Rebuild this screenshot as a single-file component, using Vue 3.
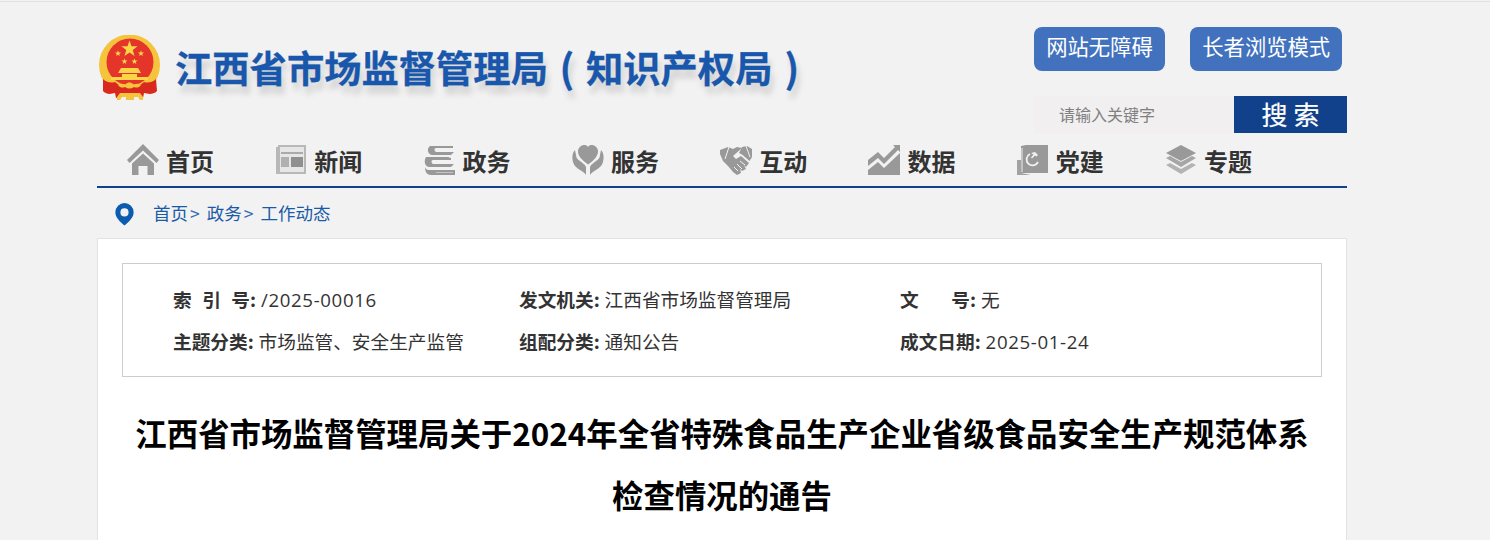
<script setup>
const navItems = [
  { name: '首页', icon: 'home' },
  { name: '新闻', icon: 'news' },
  { name: '政务', icon: 'books' },
  { name: '服务', icon: 'care' },
  { name: '互动', icon: 'shake' },
  { name: '数据', icon: 'chart' },
  { name: '党建', icon: 'party' },
  { name: '专题', icon: 'layers' }
]

const metaRows = [
  [
    { label: '索&ensp;&#8202;引&ensp;&#8202;号:', value: '/2025-00016', num: true },
    { label: '发文机关:', value: '江西省市场监督管理局' },
    { label: '文&emsp;&ensp;&#8197;号:', value: '无' }
  ],
  [
    { label: '主题分类:', value: '市场监管、安全生产监管' },
    { label: '组配分类:', value: '通知公告' },
    { label: '成文日期:', value: '2025-01-24', num: true }
  ]
]
</script>

<template>
  <div class="wrap">
    <div class="top-line"></div>
    <div class="page">
      <header class="header">
        <div class="brand">
          <svg class="emblem" viewBox="0 0 62 66" width="62" height="66">
            <defs>
              <path id="star" d="M0-1l.235.676.716.015-.571.432.207.686L0 .4l-.587.409.207-.686-.571-.432.716-.015z" fill="#f9d648" />
            </defs>
            <circle cx="30.500" cy="30" r="30.500" fill="#f5c33c" />
            <circle cx="31" cy="27" r="23.500" fill="#e5352b" />
            <use href="#star" transform="translate(30.500 14) scale(8.500)" />
            <use href="#star" transform="translate(19 18.500) scale(3.200)" />
            <use href="#star" transform="translate(42 18.500) scale(3.200)" />
            <use href="#star" transform="translate(25.500 26.500) scale(3.200)" />
            <use href="#star" transform="translate(35.500 26.500) scale(3.200)" />
            <path d="M22 33h17l3 5H19zM23 39h15v3H23zM12 42h37v3H12z" fill="#f9d648" />
            <path d="M4 44c4 4 9 4 12 3 3 3 7 5 14.500 5S42 50 45 47c3 1 8 1 12-3l1 12c-4 4-9 3-13 2l-1 5-7-3H24l-7 3-1-5c-4 1-8 2-12-2z" fill="#d9281e" />
            <path d="M19 50c3-3 6 0 8-1 2-2 5-2 7 0 2 1 5-2 8 1-2 3-5 3-7 2-3 2-6 2-9 0-2 1-5 1-7-2z" fill="#f5c33c" />
            <path d="M18 65v-3l3-4h20l3 4v3h-3l-2-3H23l-2 3zM27 60h8v5h-8z" fill="#f5c33c" />
          </svg>
          <h1 class="site-title">江西省市场监督管理局<span class="paren open">(</span>知识产权局<span class="paren">)</span></h1>
        </div>
        <div class="tools">
          <div class="tool-buttons">
            <a class="tool-btn">网站无障碍</a>
            <a class="tool-btn">长者浏览模式</a>
          </div>
          <div class="search">
            <span class="search-input">请输入关键字</span>
            <span class="search-btn">搜 索</span>
          </div>
        </div>
      </header>

      <nav class="nav">
        <a v-for="item in navItems" :key="item.name" class="nav-item">
          <svg class="nav-icon" viewBox="0 0 32 32" width="32" height="32" fill="#999">
            <template v-if="item.icon === 'home'">
              <path d="M16 0 L32 16 L29.500 19 L16 6.500 L2.500 19 L0 16Z" />
              <path d="M5 19.500 L16 9.500 L27 19.500 V31 H20.500 V22 H11.500 V31 H5Z" />
            </template>
            <template v-else-if="item.icon === 'news'">
              <path d="M3 1h28v29H1V3h2z" fill="#b8b8b8" />
              <path d="M5 3h24v25H5z" fill="#e6e6e6" />
              <path d="M6 8h22v2H6z" fill="#aaa" />
              <path d="M6 13h8v10H6z" fill="#b0b0b0" />
              <path d="M16 13h12v10H16z" fill="#8f8f8f" />
            </template>
            <template v-else-if="item.icon === 'books'">
              <path d="M6 2h23v2H12c-2 0-2 3 0 4h18l-3 3H8C3 10 3 4 6 2z" />
              <path d="M2 13h22l3 1v2H9c-2 0-2 3 0 4h21l-3 3H5C0 22 0 16 2 13z" />
              <path d="M1 23c1 3 3 3 5 3h25v5H7c-4 0-6-3-6-8z" />
              <path d="M12 28h17v1H12z" fill="#c4c4c4" />
            </template>
            <template v-else-if="item.icon === 'care'">
              <path d="M16 20.500C10 16 6 12 6 7.500 6 3 10 .5 13 1c1.500.2 2.500 1 3 2 .5-1 1.500-1.800 3-2 3-.5 7 2 7 6.500 0 4.500-4 9-10 13z" />
              <path d="M3 6C0 9 0 14 1 18c1 4 4 6 7 8 2 1 5 3 6 5v-8c-1-3-4-4-6-6-2-1-4-3-4-6z" />
              <path d="M29 6c3 3 3 8 2 12-1 4-4 6-7 8-2 1-5 3-6 5v-8c1-3 4-4 6-6 2-1 4-3 4-6z" />
            </template>
            <template v-else-if="item.icon === 'shake'">
              <path d="M0 6 L8 3 L13 5 L17 3 L22 4 L13 12 L16 15 L21 12 L29 19 L26 23 L24 21 L26 25 L22 27 L20 25 L21 29 L17 31 L13 28 L8 22 L3 17 L0 10 Z" />
              <path d="M22 3 L27 2 L32 5 V13 L29.500 17 L22 10.500 L19 9 Z" />
              <path d="M9 3L5 15M26 2l4 11M14 23l4 4M17 20l5 5M20 17l5 4" fill="none" stroke="#f2f2f2" stroke-width="1" />
            </template>
            <template v-else-if="item.icon === 'chart'">
              <path d="M0 16l10-8 6 6L27 3l-2-2h7v7l-2-2-14 14-6-6-10 8z" />
              <path d="M0 26l10-8 6 6L32 9v22H0z" />
            </template>
            <template v-else-if="item.icon === 'party'">
              <path d="M4 2l5-1h22v28H4z" />
              <path d="M0 16h4v13l10 2H0z" opacity="0.9" />
              <path d="M4 4h2v24H4z" fill="#c4c4c4" />
              <path d="M13 10a6 6 0 1 0 8 8" fill="none" stroke="#f2f2f2" stroke-width="1.800" />
              <path d="M14 9l4-1 3 3-1.500 1.500-1.500-1-3 3-1-1 2.500-3z" fill="#f2f2f2" />
            </template>
            <template v-else>
              <path d="M16 1l15 8-15 8L1 9z" />
              <path d="M1 14l4-2 11 6 11-6 4 2-15 9z" opacity="0.85" />
              <path d="M1 21l4-2 11 6 11-6 4 2-15 9z" opacity="0.7" />
            </template>
          </svg>
          <span>{{ item.name }}</span>
        </a>
      </nav>

      <div class="crumbs">
        <svg class="pin" viewBox="0 0 20 24" width="19" height="23">
          <path fill-rule="evenodd" fill="#0b5cb0" d="M10 0a9.600 9.600 0 0 1 9.600 9.600c0 5.400-4.600 9.800-9.600 14-5-4.200-9.600-8.600-9.600-14A9.600 9.600 0 0 1 10 0zm0 5.500a4.300 4.300 0 1 0 0 8.600 4.300 4.300 0 0 0 0-8.600z" />
        </svg>
        <a>首页</a><i>&gt;</i>
        <a>政务</a><i>&gt;</i>
        <a>工作动态</a>
      </div>

      <main class="article">
        <div class="meta">
          <div v-for="(row, r) in metaRows" :key="r" class="meta-row">
            <div v-for="(cell, c) in row" :key="c" class="meta-cell">
              <b v-html="cell.label"></b> <span :class="{ num: cell.num }">{{ cell.value }}</span>
            </div>
          </div>
        </div>
        <h2 class="doc-title">江西省市场监督管理局关于2024年全省特殊食品生产企业省级食品安全生产规范体系检查情况的通告</h2>
      </main>
    </div>
  </div>
</template>

<style>
html,
body {
  margin: 0;
  background: #f2f2f2;
  overflow: hidden;
}
</style>

<style scoped>
.wrap {
  padding-top: 1px;
  font-family: "Open Sans", "Noto Sans CJK SC", sans-serif;
  color: #333;
}

.top-line {
  height: 1px;
  background: #e2e2e2;
}

.page {
  width: 1250px;
  height: 538px;
  margin-left: 97px;
  overflow: hidden;
}

.header {
  display: flex;
  justify-content: space-between;
  height: 133px;
  box-sizing: border-box;
  padding-top: 25px;
}

.brand {
  display: flex;
  align-items: flex-start;
  padding-left: 2px;
  padding-top: 8px;
}

.emblem {
  flex: none;
}

.site-title {
  margin: 4px 0 0 14px;
  font-family: "Noto Sans CJK SC", sans-serif;
  font-size: 37.300px;
  line-height: 54px;
  font-weight: 700;
  color: #1857ab;
  white-space: nowrap;
  text-shadow: 3px 8px 6px rgba(0, 0, 0, 0.15);
  -webkit-text-stroke: 0.3px #1857ab;
}

.paren {
  display: inline-block;
  width: 39px;
  text-align: center;
  font-size: 39px;
}

.paren.open {
  width: 38px;
}

.tools {
  width: 313px;
}

.tool-buttons {
  display: flex;
  gap: 25px;
}

.tool-btn {
  height: 44px;
  padding: 0 12.200px;
  border-radius: 8px;
  background: #4272bd;
  color: #fff;
  font-family: "Noto Sans CJK SC", sans-serif;
  font-size: 21.330px;
  line-height: 38px;
  white-space: nowrap;
}

.search {
  display: flex;
  height: 37px;
  margin-top: 25px;
}

.search-input {
  flex: 1;
  padding-left: 25px;
  background: #f1efef;
  color: #808080;
  font-family: "Noto Sans CJK SC", sans-serif;
  font-size: 16px;
  line-height: 36px;
}

.search-btn {
  width: 113px;
  background: #12418b;
  color: #fff;
  text-align: center;
  font-family: "Noto Sans CJK SC", sans-serif;
  font-size: 26px;
  line-height: 36px;
  -webkit-text-stroke: 0.2px #fff;
}

.nav {
  display: flex;
  height: 53px;
  box-sizing: border-box;
  padding-left: 30px;
  border-bottom: 2px solid #12418b;
}

.nav-item {
  display: flex;
  align-items: center;
  gap: 7px;
  width: 148.300px;
  padding-bottom: 1px;
  font-family: "Noto Sans CJK SC", sans-serif;
  font-size: 24px;
  font-weight: 700;
  color: #333;
}

.nav-icon {
  flex: none;
}

.crumbs {
  display: flex;
  align-items: center;
  height: 50px;
  box-sizing: border-box;
  padding: 0 0 2px 18px;
  font-family: "Noto Sans CJK SC", sans-serif;
  font-size: 17.500px;
  color: #1a5ba8;
}

.pin {
  margin: 4px 19px 0 0;
}

.crumbs i {
  margin: 0 7px 0 2px;
  font-style: normal;
  color: #3a6db5;
}

.article {
  box-sizing: border-box;
  height: 400px;
  padding: 24px 24px 0;
  background: #fff;
  border: 1px solid #e3e3e3;
}

.meta {
  box-sizing: border-box;
  height: 114px;
  padding: 13px 0 0 50px;
  border: 1px solid #ccc;
}

.meta-row {
  display: flex;
  height: 42px;
  align-items: center;
  font-size: 18.670px;
  white-space: nowrap;
}

.meta-cell {
  width: 346px;
}

.meta-cell:nth-child(2) {
  width: 381px;
}

.meta-cell b {
  font-family: "Noto Sans CJK SC", sans-serif;
  font-weight: 700;
}

.num {
  letter-spacing: 0.65px;
}

.doc-title {
  margin: 25px 0 0;
  text-align: center;
  font-family: "Noto Sans CJK SC", sans-serif;
  font-size: 31.420px;
  line-height: 62px;
  font-weight: 700;
  color: #000;
}
</style>
